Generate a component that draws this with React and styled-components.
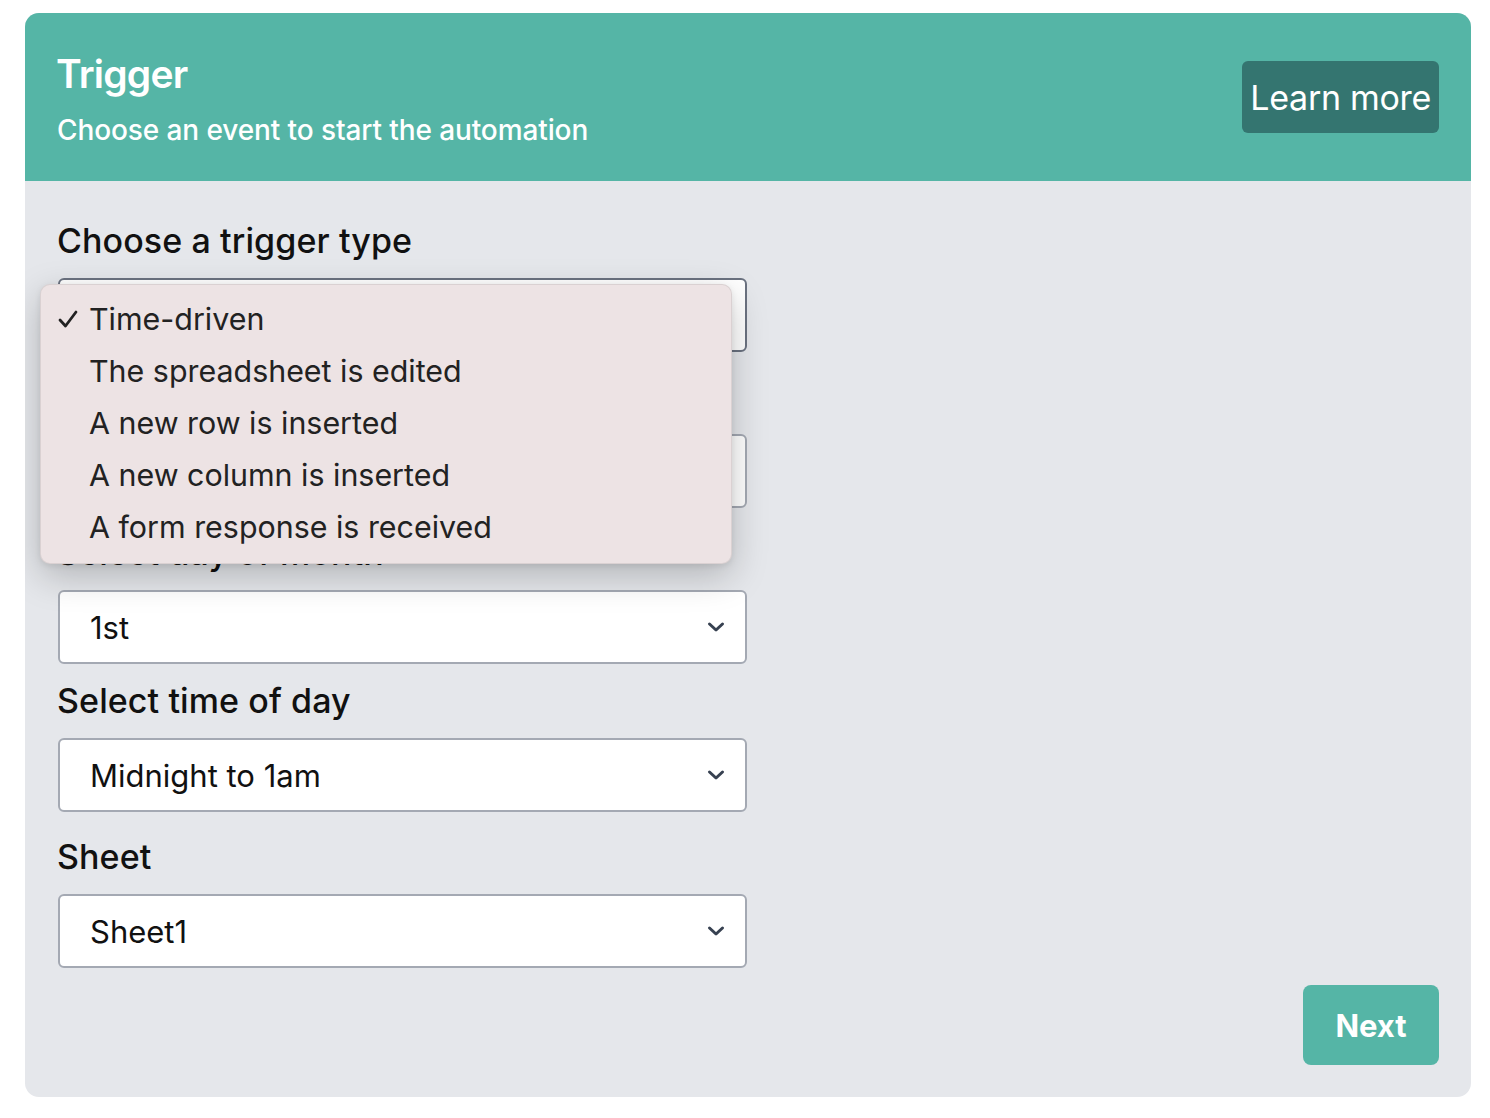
import React from "react";
import styled, { createGlobalStyle } from "styled-components";

const Global = createGlobalStyle`
  html, body { margin: 0; padding: 0; background: #ffffff; }
  body { font-family: Inter, "Noto Sans", "Liberation Sans", sans-serif; -webkit-font-smoothing: antialiased; }
  * { box-sizing: border-box; }
`;

const Page = styled.div`
  padding: 13px 19px 21px 25px;
`;

const Card = styled.section`
  width: 1446px;
  height: 1084px;
  border-radius: 14px;
  overflow: hidden;
  background: #e5e7eb;
  display: flex;
  flex-direction: column;
`;

const Header = styled.header`
  height: 168px;
  flex: none;
  background: #55b5a6;
  display: flex;
  align-items: center;
  justify-content: space-between;
  padding: 0 32px;
`;

const HeaderText = styled.div`
  display: flex;
  flex-direction: column;
  gap: 16px;
  margin-top: 3px;
`;

const Title = styled.h1`
  margin: 0;
  color: #ffffff;
  font-size: 39px;
  font-weight: 600;
  line-height: 46px;
  letter-spacing: -0.8px;
  margin-left: -1px;
`;

const Subtitle = styled.p`
  margin: 0;
  color: #ffffff;
  font-size: 28px;
  font-weight: 500;
  line-height: 34px;
  letter-spacing: -0.1px;
`;

const LearnButton = styled.button`
  height: 72px;
  padding: 0 8px;
  border: none;
  border-radius: 6px;
  background: #347570;
  color: #ffffff;
  font-family: inherit;
  font-size: 34px;
  font-weight: 400;
  letter-spacing: -0.3px;
`;

const Body = styled.div`
  flex: 1;
  display: flex;
  flex-direction: column;
  padding: 40px 32px 32px 33px;
`;

const Form = styled.div`
  width: 689px;
  display: flex;
  flex-direction: column;
`;

const Field = styled.div`
  position: relative;
  display: flex;
  flex-direction: column;
  margin-top: ${(p) => (p.$first ? 0 : p.$tight ? 17 : 25)}px;
`;

const Label = styled.label`
  font-size: 34px;
  font-weight: 500;
  line-height: 40px;
  color: #111111;
  letter-spacing: 0.1px;
  margin-bottom: 17px;
  margin-left: -1px;
`;

const SelectBox = styled.div`
  height: 74px;
  background: #ffffff;
  border: 2px solid ${(p) => (p.$focused ? "#6b7280" : "#a4a9b3")};
  border-radius: 6px;
  display: flex;
  align-items: center;
  justify-content: space-between;
  padding: 0 20px 0 30px;
  font-size: 31px;
  color: #111111;
`;

const Chevron = () => (
  <svg width="18" height="12" viewBox="0 0 18 12" fill="none">
    <path d="M2.5 3 L9 9 L15.5 3" stroke="#374151" strokeWidth="3" strokeLinecap="round" strokeLinejoin="round" />
  </svg>
);

const Menu = styled.ul`
  position: absolute;
  left: -18px;
  top: 63px;
  width: 692px;
  height: 280px;
  margin: 0;
  padding: 8px 0 12px;
  list-style: none;
  background: #ede3e4;
  border: 1px solid rgba(0, 0, 0, 0.08);
  border-radius: 10px;
  box-shadow: 0 12px 36px rgba(0, 0, 0, 0.22), 0 2px 6px rgba(0, 0, 0, 0.08);
  z-index: 10;
`;

const MenuItem = styled.li`
  height: 52px;
  display: flex;
  align-items: center;
  font-size: 30.4px;
  color: #222222;
`;

const Check = styled.span`
  width: 48px;
  flex: none;
  display: flex;
  justify-content: flex-end;
  padding-right: 10px;
`;

const Footer = styled.div`
  margin-top: auto;
  display: flex;
  justify-content: flex-end;
`;

const NextButton = styled.button`
  width: 136px;
  height: 80px;
  border: none;
  border-radius: 8px;
  background: #55b5a6;
  color: #ffffff;
  font-family: inherit;
  font-size: 31px;
  font-weight: 700;
`;

const options = [
  "Time-driven",
  "The spreadsheet is edited",
  "A new row is inserted",
  "A new column is inserted",
  "A form response is received",
];

const CheckMark = () => (
  <svg width="22" height="20" viewBox="0 0 22 20" fill="none">
    <path d="M3 11 L8.5 17 L19 3" stroke="#222" strokeWidth="2.8" strokeLinecap="round" strokeLinejoin="round" />
  </svg>
);

export default function App() {
  return (
    <Page>
      <Global />
      <Card>
        <Header>
          <HeaderText>
            <Title>Trigger</Title>
            <Subtitle>Choose an event to start the automation</Subtitle>
          </HeaderText>
          <LearnButton>Learn more</LearnButton>
        </Header>
        <Body>
          <Form>
            <Field $first>
              <Label>Choose a trigger type</Label>
              <SelectBox $focused>
                <span>Time-driven</span>
                <Chevron />
              </SelectBox>
              <Menu>
                {options.map((o, i) => (
                  <MenuItem key={o}>
                    <Check>{i === 0 ? <CheckMark /> : null}</Check>
                    {o}
                  </MenuItem>
                ))}
              </Menu>
            </Field>
            <Field>
              <Label>Select frequency</Label>
              <SelectBox>
                <span>Monthly</span>
                <Chevron />
              </SelectBox>
            </Field>
            <Field>
              <Label>Select day of month</Label>
              <SelectBox>
                <span>1st</span>
                <Chevron />
              </SelectBox>
            </Field>
            <Field $tight>
              <Label>Select time of day</Label>
              <SelectBox>
                <span>Midnight to 1am</span>
                <Chevron />
              </SelectBox>
            </Field>
            <Field>
              <Label>Sheet</Label>
              <SelectBox>
                <span>Sheet1</span>
                <Chevron />
              </SelectBox>
            </Field>
          </Form>
          <Footer>
            <NextButton>Next</NextButton>
          </Footer>
        </Body>
      </Card>
    </Page>
  );
}
